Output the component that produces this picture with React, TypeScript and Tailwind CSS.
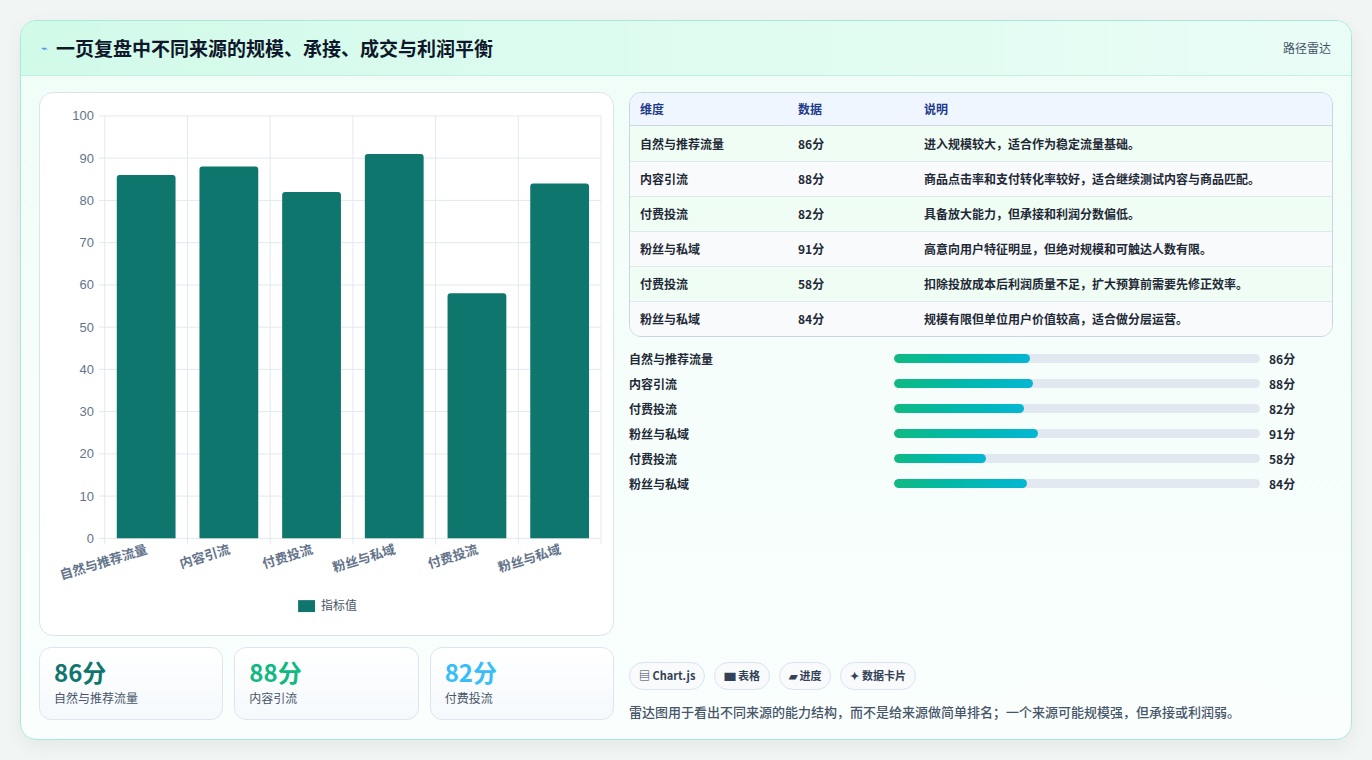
import React from "react";

const rows = [
  ["自然与推荐流量", 86, "进入规模较大，适合作为稳定流量基础。"],
  ["内容引流", 88, "商品点击率和支付转化率较好，适合继续测试内容与商品匹配。"],
  ["付费投流", 82, "具备放大能力，但承接和利润分数偏低。"],
  ["粉丝与私域", 91, "高意向用户特征明显，但绝对规模和可触达人数有限。"],
  ["付费投流", 58, "扣除投放成本后利润质量不足，扩大预算前需要先修正效率。"],
  ["粉丝与私域", 84, "规模有限但单位用户价值较高，适合做分层运营。"],
] as const;

function Chart() {
  const x0 = 65, x1 = 563, y0 = 23, y1 = 447, cw = 83;
  const sy = (v: number) => y1 - ((y1 - y0) * v) / 100;
  return (
    <svg viewBox="0 0 575 544" className="w-full h-full">
      {[0, 10, 20, 30, 40, 50, 60, 70, 80, 90, 100].map((v) => (
        <g key={v}>
          <line x1={x0 - 6} x2={x1} y1={sy(v)} y2={sy(v)} stroke="#e2e8f0" strokeWidth="1" />
          <text x={x0 - 11} y={sy(v) + 4.5} textAnchor="end" fontSize="13" fill="#64748b" fontFamily="Liberation Sans, sans-serif">{v}</text>
        </g>
      ))}
      {[0, 1, 2, 3, 4, 5, 6].map((i) => (
        <line key={i} x1={x0 + cw * i} x2={x0 + cw * i} y1={y0} y2={y1 + 6} stroke="#e2e8f0" strokeWidth="1" />
      ))}
      {rows.map((r, i) => {
        const cx = x0 + cw * i + cw / 2;
        return (
          <g key={i}>
            <path d={`M${cx - 29.5} ${y1} V${sy(r[1]) + 3} Q${cx - 29.5} ${sy(r[1])} ${cx - 26.5} ${sy(r[1])} H${cx + 26.5} Q${cx + 29.5} ${sy(r[1])} ${cx + 29.5} ${sy(r[1]) + 3} V${y1}Z`} fill="#0f766e" />
            <text transform={`translate(${cx + 2},${462}) rotate(-17)`} textAnchor="end" fontSize="13" fontWeight="600" fill="#64748b" fontFamily="Noto Sans CJK SC, sans-serif">{r[0]}</text>
          </g>
        );
      })}
      <rect x="259" y="509" width="17" height="12" fill="#0f766e" />
      <text x="282" y="519" fontSize="12" fill="#475569" fontFamily="Noto Sans CJK SC, sans-serif">指标值</text>
    </svg>
  );
}

export default function App() {
  return (
    <div className="w-[1372px] h-[760px] bg-[#f1f5f4] p-[20px] pb-[20px]" style={{ fontFamily: '"Noto Sans", "Noto Sans CJK SC", sans-serif' }}>
      <div className="h-[720px] rounded-[16px] border border-[#a7eadb] bg-gradient-to-b from-[#f0fdf7] to-[#fafffe] overflow-hidden shadow-[0_6px_20px_rgba(0,0,0,0.06)] flex flex-col">
        <div className="h-[55px] shrink-0 flex items-center justify-between px-[20px] bg-gradient-to-r from-[#d1fae9] to-[#eafdf6] border-b border-[#c6efe3]">
          <div className="flex items-center gap-[8px]">
            <span className="text-[11px] text-[#3b82f6]">⌁</span>
            <span className="text-[19px] font-bold text-[#0f172a]" style={{ fontFamily: '"Noto Sans CJK SC", sans-serif' }}>一页复盘中不同来源的规模、承接、成交与利润平衡</span>
          </div>
          <span className="text-[12px] text-[#475569]" style={{ fontFamily: '"Noto Sans CJK SC", sans-serif' }}>路径雷达</span>
        </div>
        <div className="flex-1 flex gap-[15px] px-[18px] pt-[16px] pb-[18px]" style={{ fontFamily: '"Noto Sans CJK SC", sans-serif' }}>
          <div className="w-[575px] flex flex-col gap-[11px]">
            <div className="h-[544px] rounded-[14px] border border-[#dbe4ee] bg-white">
              <Chart />
            </div>
            <div className="flex gap-[11px]">
              {[["86分", "text-[#0f766e]", "自然与推荐流量"], ["88分", "text-[#10b981]", "内容引流"], ["82分", "text-[#38bdf8]", "付费投流"]].map(([v, c, l]) => (
                <div key={l} className="flex-1 h-[73px] rounded-[12px] border border-[#dbe6f0] bg-gradient-to-b from-white to-[#f5f9fc] px-[14px] pt-[9px]">
                  <div className={`text-[24px] font-bold leading-[30px] ${c}`}>{v}</div>
                  <div className="text-[12px] text-[#475569] mt-[2px]">{l}</div>
                </div>
              ))}
            </div>
          </div>
          <div className="w-[704px] flex flex-col">
            <div className="rounded-[12px] border border-[#cbd5e1] overflow-hidden text-[12px]">
              <div className="flex h-[33px] items-center bg-[#eff6ff] border-b border-[#cbd5e1] text-[#1e3a8a] font-semibold">
                <div className="w-[168px] pl-[10px]">维度</div>
                <div className="w-[126px]">数据</div>
                <div className="flex-1">说明</div>
              </div>
              {rows.map((r, i) => (
                <div key={i} className={`flex h-[35px] items-center text-[#1f2937] font-semibold ${i > 0 ? "border-t border-[#e2e8f0]" : ""} ${i % 2 === 0 ? "bg-[#f0fdf4]" : "bg-[#f8fafc]"}`}>
                  <div className="w-[168px] pl-[10px]">{r[0]}</div>
                  <div className="w-[126px]">{r[1]}分</div>
                  <div className="flex-1">{r[2]}</div>
                </div>
              ))}
            </div>
            <div className="mt-[9px] flex flex-col">
              {rows.map((r, i) => (
                <div key={i} className="h-[25px] flex items-center text-[12px] font-semibold text-[#1f2937]">
                  <div className="w-[265px]">{r[0]}</div>
                  <div className="w-[366px] h-[9px] rounded-full bg-[#e2e8f0] overflow-hidden">
                    <div className="h-full rounded-full bg-gradient-to-r from-[#10b981] to-[#06b6d4]" style={{ width: `${r[1] * 1.58}px` }} />
                  </div>
                  <div className="ml-[9px]">{r[1]}分</div>
                </div>
              ))}
            </div>
            <div className="flex-1" />
            <div className="flex gap-[9px] text-[11px] font-semibold text-[#334155]">
              {["▤ Chart.js", "▆ 表格", "▰ 进度", "✦ 数据卡片"].map((t) => (
                <div key={t} className="h-[28px] px-[9px] flex items-center rounded-full border border-[#dbe4ee] bg-[#f8fafc]">{t}</div>
              ))}
            </div>
            <div className="mt-[12px] text-[13px] text-[#475569] font-medium">雷达图用于看出不同来源的能力结构，而不是给来源做简单排名；一个来源可能规模强，但承接或利润弱。</div>
          </div>
        </div>
      </div>
    </div>
  );
}
